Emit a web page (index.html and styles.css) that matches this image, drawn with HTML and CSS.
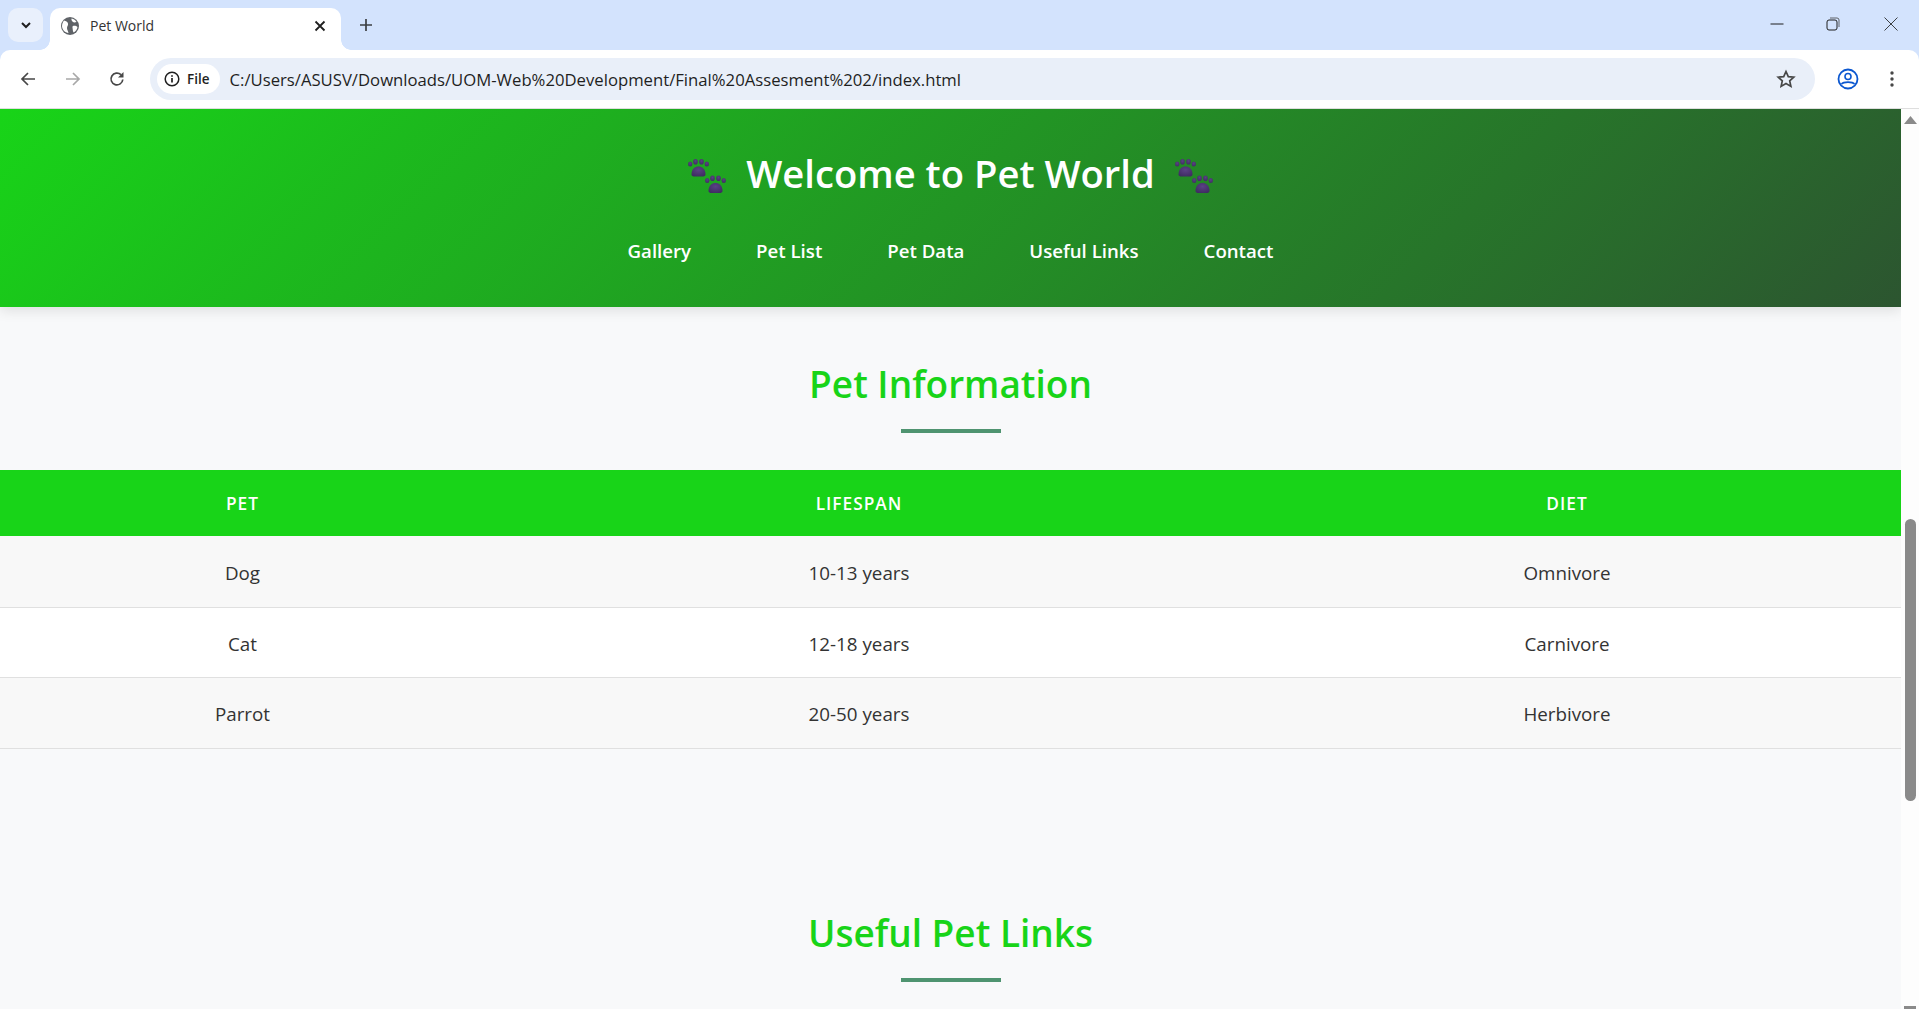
FILE: index.html
```html
<!DOCTYPE html>
<html lang="en">
<head>
  <meta charset="UTF-8">
  <meta name="viewport" content="width=device-width, initial-scale=1.0">
  <title>Pet World</title>
  <link rel="stylesheet" href="styles.css">
</head>
<body>
  <!-- Browser chrome -->
  <div class="tab-strip">
    <button class="tab-search">
      <svg width="14" height="14" viewBox="0 0 14 14"><path d="M3 5l4 4 4-4" fill="none" stroke="#1f1f1f" stroke-width="2"/></svg>
    </button>
    <div class="tab">
      <svg class="tab-globe" width="18" height="18" viewBox="0 0 18 18">
        <circle cx="9" cy="9" r="9" fill="#5f6368"/>
        <path d="M3 3.500c2 .5 3.500 1 4 3s-1 2.500-1 4.500 1 2.500 1.500 5C4 15.500 1.500 13 1 9.500 1 7 1.800 5 3 3.500zM10.500 1.500c2.500.5 4 1.700 5 3.500-1.500.5-3 .5-3.500 0s-2-1.500-1.500-3.500zM12 9c1.500-.5 3.500 0 4.500 1-.3 2.500-1.800 4.500-3.800 5.500-.7-1-1-2.500-1-3.500S11 9.500 12 9z" fill="#fff"/>
      </svg>
      <span class="tab-title">Pet World</span>
      <svg width="12" height="12" viewBox="0 0 12 12"><path d="M1.500 1.500l9 9M10.500 1.500l-9 9" stroke="#1f1f1f" stroke-width="1.800"/></svg>
    </div>
    <svg class="new-tab" width="14" height="14" viewBox="0 0 14 14"><path d="M7 1v12M1 7h12" stroke="#3c4043" stroke-width="1.700"/></svg>
    <div class="window-controls">
      <svg width="14" height="14" viewBox="0 0 14 14"><path d="M.5 7h13" stroke="#1f1f1f" stroke-width="1"/></svg>
      <svg width="14" height="14" viewBox="0 0 14 14"><rect x="1" y="3" width="10" height="10" rx="2" fill="none" stroke="#1f1f1f" stroke-width="1"/><path d="M4 1h7a2 2 0 0 1 2 2v7" fill="none" stroke="#5f6368" stroke-width="1"/></svg>
      <svg class="win-close" width="14" height="14" viewBox="0 0 14 14"><path d="M.5.500l13 13M13.500.500l-13 13" stroke="#3c4043" stroke-width="1"/></svg>
    </div>
  </div>

  <div class="toolbar">
    <svg width="16" height="16" viewBox="0 0 16 16"><path d="M15 8H2M8 2L2 8l6 6" fill="none" stroke="#474747" stroke-width="1.700"/></svg>
    <svg class="forward" width="16" height="16" viewBox="0 0 16 16"><path d="M1 8h13M8 2l6 6-6 6" fill="none" stroke="#a8a8a8" stroke-width="1.700"/></svg>
    <svg class="reload" width="16" height="16" viewBox="0 0 16 16"><path d="M13.800 8.500A5.900 5.900 0 1 1 12 3.700" fill="none" stroke="#474747" stroke-width="1.700"/><path d="M14.500 1v5.500H9z" fill="#474747"/></svg>
    <div class="omnibox">
      <div class="file-chip">
        <svg width="16" height="16" viewBox="0 0 16 16"><circle cx="8" cy="8" r="6.800" fill="none" stroke="#1f1f1f" stroke-width="1.500"/><path d="M8 7v4.500M8 4.300v1.500" stroke="#1f1f1f" stroke-width="1.700"/></svg>
        <span>File</span>
      </div>
      <span class="url">C:/Users/ASUSV/Downloads/UOM-Web%20Development/Final%20Assesment%202/index.html</span>
      <svg class="star" width="20" height="20" viewBox="0 0 20 20"><path d="M10 2.500l2.300 5.100 5.500.6-4.100 3.700 1.200 5.500-4.900-2.800-4.900 2.800 1.200-5.500-4.100-3.700 5.500-.6z" fill="none" stroke="#474747" stroke-width="1.700"/></svg>
    </div>
    <svg class="profile" width="22" height="22" viewBox="0 0 22 22"><circle cx="11" cy="11" r="9.500" fill="none" stroke="#0b57d0" stroke-width="1.800"/><circle cx="11" cy="8.500" r="3" fill="none" stroke="#0b57d0" stroke-width="1.600"/><path d="M4.500 16c2-2.500 11-2.500 13 0" fill="none" stroke="#0b57d0" stroke-width="1.600"/></svg>
    <svg class="menu" width="4" height="16" viewBox="0 0 4 16"><circle cx="2" cy="2" r="1.700" fill="#474747"/><circle cx="2" cy="8" r="1.700" fill="#474747"/><circle cx="2" cy="14" r="1.700" fill="#474747"/></svg>
  </div>

  <div class="viewport">
    <div class="page">
      <header>
        <h1>
          <svg class="paws" viewBox="0 0 38 34"><use href="#paw" x="0" y="0"/><use href="#paw" x="17" y="16.500"/></svg>
          <span>Welcome to Pet World</span>
          <svg class="paws" viewBox="0 0 38 34"><use href="#paw" x="0" y="0"/><use href="#paw" x="17" y="16.500"/></svg>
        </h1>
        <nav>
          <a href="#gallery">Gallery</a>
          <a href="#list">Pet List</a>
          <a href="#data">Pet Data</a>
          <a href="#links">Useful Links</a>
          <a href="#contact">Contact</a>
        </nav>
      </header>

      <section id="data" class="pet-data">
        <h2>Pet Information</h2>
        <table>
          <colgroup>
            <col class="col-pet">
            <col class="col-life">
            <col class="col-diet">
          </colgroup>
          <thead>
            <tr><th>Pet</th><th>Lifespan</th><th>Diet</th></tr>
          </thead>
          <tbody>
            <tr><td>Dog</td><td>10-13 years</td><td>Omnivore</td></tr>
            <tr><td>Cat</td><td>12-18 years</td><td>Carnivore</td></tr>
            <tr><td>Parrot</td><td>20-50 years</td><td>Herbivore</td></tr>
          </tbody>
        </table>
      </section>

      <section id="links" class="pet-links">
        <h2>Useful Pet Links</h2>
      </section>
    </div>

    <div class="scrollbar">
      <svg class="arrow-up" width="13" height="8" viewBox="0 0 13 8"><path d="M6.500 0l6.500 8H0z" fill="#8a8a8a"/></svg>
      <div class="thumb"></div>
      <div class="arrow-down"></div>
    </div>
  </div>

  <svg class="defs" width="0" height="0">
    <defs>
      <radialGradient id="pawFill" cx="50%" cy="35%" r="70%">
        <stop offset="0" stop-color="#5a4285"/>
        <stop offset="1" stop-color="#3e2b60"/>
      </radialGradient>
      <g id="paw" fill="url(#pawFill)">
        <path d="M3.500 15.500C3.500 10 6.800 7.500 10.500 7.500S17.500 10 17.500 15.500c0 1.500-1.500 2-3 2h-8c-1.500 0-3-.5-3-2z"/>
        <ellipse cx="2.200" cy="5" rx="2.200" ry="2.500"/>
        <ellipse cx="7.500" cy="2.800" rx="2.300" ry="2.800"/>
        <ellipse cx="13.500" cy="2.800" rx="2.300" ry="2.800"/>
        <ellipse cx="18.800" cy="5" rx="2.200" ry="2.500"/>
      </g>
    </defs>
  </svg>
</body>
</html>
```

FILE: styles.css
```css
/* General styles */
* {
  box-sizing: border-box;
}

html, body {
  height: 100%;
}

body {
  margin: 0;
  overflow: hidden;
  display: flex;
  flex-direction: column;
  font-family: "Open Sans", "Noto Sans", sans-serif;
  background-color: #d3e3fd;
  color: #333;
}

/* Browser chrome */
.tab-strip {
  height: 50px;
  flex: none;
  display: flex;
  align-items: flex-start;
}

.tab-search {
  width: 35px;
  height: 34px;
  margin: 8px 0 0 8px;
  padding: 0;
  border: 0;
  border-radius: 10px;
  background-color: #e9f0fc;
  display: flex;
  align-items: center;
  justify-content: center;
}

.tab {
  position: relative;
  z-index: 1;
  width: 291px;
  height: 42px;
  margin: 8px 0 0 7px;
  padding: 0 15px 7px 11px;
  border-radius: 10px 10px 0 0;
  background-color: #fff;
  display: flex;
  align-items: center;
  color: #333;
}

/* Flared bottom corners of the active tab */
.tab::before,
.tab::after {
  content: "";
  position: absolute;
  bottom: 0;
  width: 10px;
  height: 10px;
}

.tab::before {
  left: -10px;
  background: radial-gradient(circle at 0 0, transparent 9.500px, #fff 10px);
}

.tab::after {
  right: -10px;
  background: radial-gradient(circle at 100% 0, transparent 9.500px, #fff 10px);
}

.tab-title {
  flex: 1;
  margin-left: 11px;
  font-size: 14px;
}

.new-tab {
  margin: 18px 0 0 18px;
}

.window-controls {
  margin: 17px 0 0 auto;
  display: flex;
  gap: 42px;
  padding-right: 21px;
}

.win-close {
  margin-left: 2px;
}

.toolbar {
  height: 59px;
  flex: none;
  display: flex;
  align-items: center;
  padding: 0 25px 0 20px;
  background-color: #fff;
  border-bottom: 1px solid #dedede;
  border-radius: 10px 10px 0 0;
}

.forward {
  margin-left: 29px;
}

.reload {
  margin-left: 28px;
}

.omnibox {
  flex: 1;
  height: 42px;
  margin-left: 25px;
  padding: 0 19px 0 7px;
  border-radius: 21px;
  background-color: #e9eff9;
  display: flex;
  align-items: center;
}

.file-chip {
  height: 30px;
  padding: 0 10px 0 7px;
  border-radius: 15px;
  background-color: #fff;
  display: flex;
  align-items: center;
  gap: 7px;
  font-size: 13.500px;
  font-weight: 600;
  color: #1f1f1f;
}

.url {
  flex: 1;
  margin-left: 10px;
  font-size: 16.700px;
  color: #1f1f1f;
}

.profile {
  margin-left: 22px;
}

.menu {
  margin-left: 31px;
}

.defs {
  position: absolute;
}

/* Page area */
.viewport {
  flex: 1;
  min-height: 0;
  display: flex;
}

.page {
  flex: 1;
  min-width: 0;
  overflow: hidden;
  background-color: #f8f9fa;
}

.scrollbar {
  width: 18px;
  flex: none;
  padding-top: 7px;
  display: flex;
  flex-direction: column;
  align-items: center;
  background-color: #fdfdfd;
}

.arrow-up {
  flex: none;
}

.thumb {
  width: 11px;
  height: 282px;
  margin-top: 395px;
  border-radius: 6px;
  background-color: #8a8a8a;
}

.arrow-down {
  width: 12px;
  height: 3px;
  margin-top: auto;
  background-color: #8a8a8a;
}

/* Header */
header {
  height: 198px;
  padding-top: 32px;
  background: linear-gradient(135deg, #18d418, #2c5530);
  box-shadow: 0 4px 12px rgba(0, 0, 0, 0.1);
  color: #fff;
  text-align: center;
}

h1 {
  margin: 0;
  height: 64px;
  display: flex;
  align-items: center;
  justify-content: center;
  gap: 20px;
  font-size: 38.200px;
  font-weight: 600;
}

.paws {
  width: 38px;
  height: 34px;
  margin-top: 6px;
  flex: none;
}

nav {
  margin-top: 33px;
  display: flex;
  justify-content: center;
  gap: 65px;
}

nav a {
  color: #fff;
  font-size: 18.650px;
  font-weight: 600;
  text-decoration: none;
}

/* Sections */
h2 {
  margin: 0;
  color: #18d418;
  font-size: 37px;
  font-weight: 600;
  line-height: 42px;
  text-align: center;
}

h2::after {
  content: "";
  display: block;
  width: 100px;
  height: 4px;
  margin: 24px auto 0;
  background-color: #4f9470;
}

.pet-data {
  padding-top: 56px;
}

.pet-data h2 {
  margin-bottom: 37px;
}

/* Pet table */
table {
  width: 100%;
  border-collapse: collapse;
  table-layout: fixed;
}

.col-pet {
  width: 485px;
}

.col-life {
  width: 748px;
}

th {
  height: 66px;
  background-color: #18d418;
  color: #fff;
  font-size: 17.300px;
  font-weight: 600;
  letter-spacing: 1px;
  text-transform: uppercase;
}

td {
  height: 71px;
  padding-top: 4px;
  border-bottom: 1px solid #e0e0e0;
  font-size: 18.800px;
  text-align: center;
}

tbody tr:nth-child(2) td {
  height: 70px;
}

tbody tr:nth-child(odd) {
  background-color: #f8f8f8;
}

tbody tr:nth-child(even) {
  background-color: #fff;
}

.pet-links {
  padding-top: 163px;
}
```
